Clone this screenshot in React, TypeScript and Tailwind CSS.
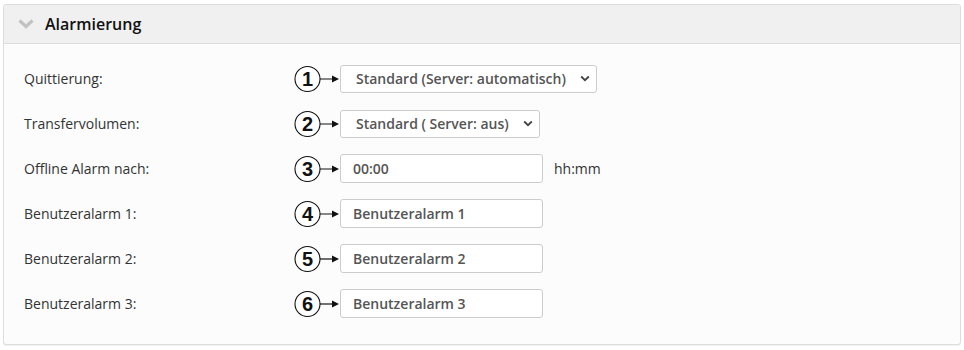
import React from "react";

const Marker = ({ n }: { n: number }) => (
  <svg width="46" height="28" viewBox="0 0 46 28" className="shrink-0">
    <circle cx="13.5" cy="14" r="12.5" fill="white" stroke="#111" strokeWidth="1.1" />
    <text
      x="13.5"
      y="21"
      textAnchor="middle"
      fontFamily="'Liberation Sans', Arial, sans-serif"
      fontWeight="bold"
      fontSize="20"
      fill="#111"
    >
      {n}
    </text>
    <line x1="26" y1="14" x2="40" y2="14" stroke="#111" strokeWidth="1.2" />
    <polygon points="38,10.5 45,14 38,17.5" fill="#111" />
  </svg>
);

const Chevron = () => (
  <svg width="10" height="7" viewBox="0 0 10 7" className="ml-auto">
    <path d="M1.2 1.5 L5 5.2 L8.8 1.5" fill="none" stroke="#444" strokeWidth="1.8" />
  </svg>
);

const SelectBox = ({ text, w }: { text: string; w: string }) => (
  <div
    className={`${w} h-[28px] flex items-center pl-[15px] pr-[6px] bg-white border border-[#cccccc] rounded-[3px] text-[14px] font-semibold text-[#555]`}
  >
    <span>{text}</span>
    <Chevron />
  </div>
);

const InputBox = ({ text }: { text: string }) => (
  <div className="w-[203px] h-[29px] flex items-center pl-[12px] bg-white border border-[#cccccc] rounded-[3px] text-[14px] font-semibold text-[#555]">
    {text}
  </div>
);

export default function App() {
  const rows: { label: string; n: number; ctrl: React.ReactNode }[] = [
    { label: "Quittierung:", n: 1, ctrl: <SelectBox text="Standard (Server: automatisch)" w="w-[257px]" /> },
    { label: "Transfervolumen:", n: 2, ctrl: <SelectBox text="Standard ( Server: aus)" w="w-[200px]" /> },
    {
      label: "Offline Alarm nach:",
      n: 3,
      ctrl: (
        <div className="flex items-center">
          <InputBox text="00:00" />
          <span className="ml-[11px] text-[14px] text-[#333]">hh:mm</span>
        </div>
      ),
    },
    { label: "Benutzeralarm 1:", n: 4, ctrl: <InputBox text="Benutzeralarm 1" /> },
    { label: "Benutzeralarm 2:", n: 5, ctrl: <InputBox text="Benutzeralarm 2" /> },
    { label: "Benutzeralarm 3:", n: 6, ctrl: <InputBox text="Benutzeralarm 3" /> },
  ];
  return (
    <div
      className="w-[964px] h-[350px] bg-white pt-[4px] pl-[3px]"
      style={{ fontFamily: "'Open Sans', 'Noto Sans', sans-serif" }}
    >
      <div className="w-[958px] border border-[#dddddd] rounded-[3px] bg-[#fcfcfc] shadow-[0_1px_1px_rgba(0,0,0,0.06)] overflow-hidden">
        <div className="h-[39px] bg-[#f0f0f0] border-b border-[#dddddd] flex items-center pl-[14px]">
          <svg width="16" height="10" viewBox="0 0 16 10">
            <path d="M1.5 1.5 L8 7.5 L14.5 1.5" fill="none" stroke="#c2c2c2" strokeWidth="3.2" />
          </svg>
          <span className="ml-[11px] text-[16px] font-semibold text-[#111]">Alarmierung</span>
        </div>
        <div className="pt-[12px] pb-[18px] pl-[20px]">
          {rows.map((r) => (
            <div key={r.n} className="h-[45px] flex items-center">
              <div className="w-[270px] text-[14px] text-[#333]">{r.label}</div>
              <Marker n={r.n} />
              {r.ctrl}
            </div>
          ))}
        </div>
      </div>
    </div>
  );
}
